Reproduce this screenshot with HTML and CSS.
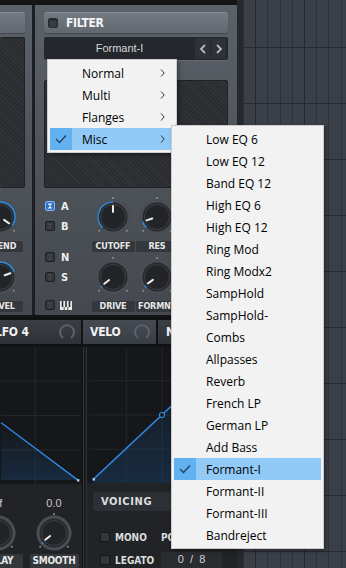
FILE: index.html
```html
<!DOCTYPE html>
<html lang="en">
<head>
  <meta charset="UTF-8">
  <meta name="viewport" content="width=device-width, initial-scale=1.0">
  <title>Filter type</title>
  <link rel="stylesheet" href="styles.css">
</head>
<body>
<div class="app">
  <div class="synth">
    <div class="upper">
      <!-- osc module, only its right edge shows -->
      <div class="mod mod-left">
        <div class="mod-head"></div>
        <div class="screen"></div>
        <div class="kstack">
          <div class="kcell">
            <svg class="knob" viewBox="0 0 40 40" width="40" height="40">
              <circle class="k-ring" cx="20" cy="20" r="17.5"/>
              <circle class="k-groove" cx="20" cy="20" r="14.5"/>
              <path class="k-arc" d="M9.39 30.61 A15 15 0 1 1 32.29 28.6"/>
              <circle class="k-cap" cx="20" cy="20" r="12.5"/>
              <line class="k-ptr" x1="20" y1="15" x2="20" y2="9" transform="rotate(125 20 20)"/>
              <circle class="k-dot" cx="33.8" cy="33.8" r="1"/>
            </svg>
            <div class="klabel">BLEND</div>
          </div>
          <div class="kcell">
            <svg class="knob" viewBox="0 0 40 40" width="40" height="40">
              <circle class="k-ring" cx="20" cy="20" r="17.5"/>
              <circle class="k-groove" cx="20" cy="20" r="14.5"/>
              <path class="k-arc" d="M9.39 30.61 A15 15 0 1 1 34.1 14.87"/>
              <circle class="k-cap" cx="20" cy="20" r="12.5"/>
              <line class="k-ptr" x1="20" y1="15" x2="20" y2="9" transform="rotate(70 20 20)"/>
              <circle class="k-dot" cx="33.8" cy="33.8" r="1"/>
            </svg>
            <div class="klabel">LEVEL</div>
          </div>
        </div>
      </div>
      <div class="vdiv"></div>
      <!-- filter module -->
      <div class="mod mod-filter">
        <div class="mod-head">
          <span class="hcheck"></span>
          <span class="mod-title">FILTER</span>
        </div>
        <div class="picker">
          <div class="picker-name">Formant-I</div>
          <div class="picker-btn"><svg width="8" height="10" viewBox="0 0 8 10"><polyline points="6,1 2,5 6,9"/></svg></div>
          <div class="picker-btn"><svg width="8" height="10" viewBox="0 0 8 10"><polyline points="2,1 6,5 2,9"/></svg></div>
        </div>
        <div class="screen"></div>
        <div class="filter-ctrl">
          <div class="switches">
            <div class="sw sw-a">
              <svg class="cb cb-on" viewBox="0 0 10 10" width="10" height="10"><rect x="0.5" y="0.5" width="9" height="9" rx="1.5"/><path d="M2.5 2.5h5L5 5zM2.5 7.5h5L5 5z"/></svg>A
            </div>
            <div class="sw sw-b">
              <svg class="cb" viewBox="0 0 10 10" width="10" height="10"><rect x="0.5" y="0.5" width="9" height="9" rx="1.5"/><path d="M2.5 2.5h5L5 5zM2.5 7.5h5L5 5z"/></svg>B
            </div>
            <div class="sw sw-n">
              <svg class="cb" viewBox="0 0 10 10" width="10" height="10"><rect x="0.5" y="0.5" width="9" height="9" rx="1.5"/><path d="M2.5 2.5h5L5 5zM2.5 7.5h5L5 5z"/></svg>N
            </div>
            <div class="sw sw-s">
              <svg class="cb" viewBox="0 0 10 10" width="10" height="10"><rect x="0.5" y="0.5" width="9" height="9" rx="1.5"/><path d="M2.5 2.5h5L5 5zM2.5 7.5h5L5 5z"/></svg>S
            </div>
            <div class="sw sw-k">
              <svg class="cb" viewBox="0 0 10 10" width="10" height="10"><rect x="0.5" y="0.5" width="9" height="9" rx="1.5"/><path d="M2.5 2.5h5L5 5zM2.5 7.5h5L5 5z"/></svg>
              <svg class="keys" viewBox="0 0 12 9" width="12" height="9"><rect width="12" height="9" fill="#e9e9e9"/><path d="M2.5 0v6M6 0v6M9.5 0v6" stroke="#2a2c30" stroke-width="1.6"/><path d="M4.2 6v3M7.8 6v3" stroke="#2a2c30" stroke-width="0.8"/></svg>
            </div>
          </div>
          <div class="kgrid">
            <div class="kcell">
              <svg class="knob" viewBox="0 0 40 40" width="40" height="40">
                <circle class="k-ring" cx="20" cy="20" r="17.5"/>
                <circle class="k-groove" cx="20" cy="20" r="14.5"/>
                <path class="k-arc" d="M9.39 30.61 A15 15 0 0 1 20 5"/>
                <circle class="k-cap" cx="20" cy="20" r="12.5"/>
                <line class="k-ptr" x1="20" y1="15" x2="20" y2="9"/>
                <circle class="k-dot" cx="20" cy="1" r="1"/>
                <circle class="k-dot" cx="6.2" cy="33.8" r="1"/>
                <circle class="k-dot" cx="33.8" cy="33.8" r="1"/>
              </svg>
              <div class="klabel">CUTOFF</div>
            </div>
            <div class="kcell">
              <svg class="knob" viewBox="0 0 40 40" width="40" height="40">
                <circle class="k-ring" cx="20" cy="20" r="17.5"/>
                <circle class="k-groove" cx="20" cy="20" r="14.5"/>
                <path class="k-arc" d="M9.39 30.61 A15 15 0 0 1 5.73 24.64"/>
                <circle class="k-cap" cx="20" cy="20" r="12.5"/>
                <line class="k-ptr" x1="20" y1="15" x2="20" y2="9" transform="rotate(-108 20 20)"/>
                <circle class="k-dot" cx="20" cy="1" r="1"/>
                <circle class="k-dot" cx="6.2" cy="33.8" r="1"/>
                <circle class="k-dot" cx="33.8" cy="33.8" r="1"/>
              </svg>
              <div class="klabel">RES</div>
            </div>
            <div class="kcell">
              <svg class="knob" viewBox="0 0 40 40" width="40" height="40">
                <circle class="k-ring" cx="20" cy="20" r="17.5"/>
                <circle class="k-groove" cx="20" cy="20" r="14.5"/>
                <path class="k-arc" d="M9.39 30.61 A15 15 0 0 1 8.18 29.23"/>
                <circle class="k-cap" cx="20" cy="20" r="12.5"/>
                <line class="k-ptr" x1="20" y1="15" x2="20" y2="9" transform="rotate(-128 20 20)"/>
                <circle class="k-dot" cx="20" cy="1" r="1"/>
                <circle class="k-dot" cx="6.2" cy="33.8" r="1"/>
                <circle class="k-dot" cx="33.8" cy="33.8" r="1"/>
              </svg>
              <div class="klabel">DRIVE</div>
            </div>
            <div class="kcell">
              <svg class="knob" viewBox="0 0 40 40" width="40" height="40">
                <circle class="k-ring" cx="20" cy="20" r="17.5"/>
                <circle class="k-groove" cx="20" cy="20" r="14.5"/>
                <path class="k-arc" d="M9.39 30.61 A15 15 0 0 1 7.71 28.6"/>
                <circle class="k-cap" cx="20" cy="20" r="12.5"/>
                <line class="k-ptr" x1="20" y1="15" x2="20" y2="9" transform="rotate(-125 20 20)"/>
                <circle class="k-dot" cx="20" cy="1" r="1"/>
                <circle class="k-dot" cx="6.2" cy="33.8" r="1"/>
                <circle class="k-dot" cx="33.8" cy="33.8" r="1"/>
              </svg>
              <div class="klabel">FORMNT</div>
            </div>
          </div>
        </div>
      </div>
    </div>

    <div class="lower">
      <div class="tabs">
        <div class="tab tab-lfo">LFO 4
          <svg class="tab-ring" viewBox="0 0 18 18" width="18" height="18"><path d="M5 15 A7 7 0 1 1 13 15"/></svg>
        </div>
        <div class="tab tab-on">VELO
          <svg class="tab-ring" viewBox="0 0 18 18" width="18" height="18"><path d="M5 15 A7 7 0 1 1 13 15"/></svg>
        </div>
        <div class="tab tab-note">NOTE</div>
      </div>
      <div class="lbody">
        <div class="lcol">
          <svg class="graph" viewBox="0 0 82 141" width="82" height="141">
            <defs>
              <linearGradient id="glowA" x1="0" y1="0" x2="0" y2="1">
                <stop offset="0" stop-color="#1d4f86" stop-opacity="0"/>
                <stop offset="1" stop-color="#1d4f86" stop-opacity="0.35"/>
              </linearGradient>
            </defs>
            <path class="g-grid" d="M35 0v141M0 35h82M0 70.5h82M0 106h82"/>
            <path d="M0 78 L79 137 L0 137z" fill="url(#glowA)"/>
            <path class="g-line" d="M0 78 L79 137"/>
            <rect class="g-node" x="78" y="136" width="2.5" height="2.5"/>
          </svg>
          <div class="ctrl ctrl-left">
            <div class="kcell kcell-off">
              <div class="kval">Off</div>
              <svg class="knob" viewBox="0 0 40 40" width="40" height="40">
                <circle class="k-ring" cx="20" cy="20" r="17.5"/>
                <circle class="k-groove" cx="20" cy="20" r="14.5"/>
                <circle class="k-cap" cx="20" cy="20" r="12.5"/>
                <line class="k-ptr" x1="20" y1="15" x2="20" y2="9" transform="rotate(-135 20 20)"/>
                <circle class="k-dot" cx="33.8" cy="33.8" r="1"/>
              </svg>
              <div class="klabel">DELAY</div>
            </div>
            <div class="kcell">
              <div class="kval">0.0</div>
              <svg class="knob" viewBox="0 0 40 40" width="40" height="40">
                <circle class="k-ring" cx="20" cy="20" r="17.5"/>
                <circle class="k-groove" cx="20" cy="20" r="14.5"/>
                <path class="k-arc" d="M9.39 30.61 A15 15 0 0 1 8.18 29.23"/>
                <circle class="k-cap" cx="20" cy="20" r="12.5"/>
                <line class="k-ptr" x1="20" y1="15" x2="20" y2="9" transform="rotate(-128 20 20)"/>
                <circle class="k-dot" cx="20" cy="1" r="1"/>
                <circle class="k-dot" cx="6.2" cy="33.8" r="1"/>
                <circle class="k-dot" cx="33.8" cy="33.8" r="1"/>
              </svg>
              <div class="klabel">SMOOTH</div>
            </div>
          </div>
        </div>
        <div class="ldiv"></div>
        <div class="lcol">
          <svg class="graph" viewBox="0 0 150 141" width="150" height="141">
            <defs>
              <linearGradient id="glowB" x1="0" y1="0" x2="0" y2="1">
                <stop offset="0" stop-color="#1d4f86" stop-opacity="0"/>
                <stop offset="1" stop-color="#1d4f86" stop-opacity="0.35"/>
              </linearGradient>
            </defs>
            <path class="g-grid" d="M38 0v141M75 0v141M113 0v141M0 35h150M0 70.5h150M0 106h150"/>
            <path d="M4 137 L150 0 L150 141 L4 141z" fill="url(#glowB)"/>
            <path class="g-line" d="M4 137 L150 0"/>
            <rect class="g-node" x="3" y="136" width="2.5" height="2.5"/>
            <circle class="g-dot" cx="75" cy="70.5" r="2.6"/>
          </svg>
          <div class="ctrl ctrl-right">
            <div class="voicing">VOICING</div>
            <div class="vrow">
              <div class="vopts">
                <div class="opt"><span class="vcb"></span>MONO</div>
                <div class="opt"><span class="vcb"></span>LEGATO</div>
              </div>
              <div class="vpoly">
                <div class="opt">POLY</div>
                <div class="vbox">0&nbsp;&nbsp;/&nbsp;&nbsp;8</div>
              </div>
            </div>
          </div>
        </div>
      </div>
    </div>
  </div>
  <div class="edge"></div>
  <div class="roll"></div>
</div>

<!-- filter type menu -->
<div class="menu menu-main">
  <div class="mi"><span class="mi-chk"></span><span class="mi-txt">Normal</span><svg class="mi-arr" viewBox="0 0 5 8" width="5" height="8"><polyline points="1,0.5 4.2,4 1,7.5"/></svg></div>
  <div class="mi"><span class="mi-chk"></span><span class="mi-txt">Multi</span><svg class="mi-arr" viewBox="0 0 5 8" width="5" height="8"><polyline points="1,0.5 4.2,4 1,7.5"/></svg></div>
  <div class="mi"><span class="mi-chk"></span><span class="mi-txt">Flanges</span><svg class="mi-arr" viewBox="0 0 5 8" width="5" height="8"><polyline points="1,0.5 4.2,4 1,7.5"/></svg></div>
  <div class="mi mi-on"><span class="mi-chk"><svg class="tick" viewBox="0 0 12 10" width="12" height="10"><polyline points="1,5 4.5,8.5 11,1.5"/></svg></span><span class="mi-txt">Misc</span><svg class="mi-arr" viewBox="0 0 5 8" width="5" height="8"><polyline points="1,0.5 4.2,4 1,7.5"/></svg></div>
</div>

<div class="menu menu-sub">
  <div class="mi"><span class="mi-chk"></span><span class="mi-txt">Low EQ 6</span></div>
  <div class="mi"><span class="mi-chk"></span><span class="mi-txt">Low EQ 12</span></div>
  <div class="mi"><span class="mi-chk"></span><span class="mi-txt">Band EQ 12</span></div>
  <div class="mi"><span class="mi-chk"></span><span class="mi-txt">High EQ 6</span></div>
  <div class="mi"><span class="mi-chk"></span><span class="mi-txt">High EQ 12</span></div>
  <div class="mi"><span class="mi-chk"></span><span class="mi-txt">Ring Mod</span></div>
  <div class="mi"><span class="mi-chk"></span><span class="mi-txt">Ring Modx2</span></div>
  <div class="mi"><span class="mi-chk"></span><span class="mi-txt">SampHold</span></div>
  <div class="mi"><span class="mi-chk"></span><span class="mi-txt">SampHold-</span></div>
  <div class="mi"><span class="mi-chk"></span><span class="mi-txt">Combs</span></div>
  <div class="mi"><span class="mi-chk"></span><span class="mi-txt">Allpasses</span></div>
  <div class="mi"><span class="mi-chk"></span><span class="mi-txt">Reverb</span></div>
  <div class="mi"><span class="mi-chk"></span><span class="mi-txt">French LP</span></div>
  <div class="mi"><span class="mi-chk"></span><span class="mi-txt">German LP</span></div>
  <div class="mi"><span class="mi-chk"></span><span class="mi-txt">Add Bass</span></div>
  <div class="mi mi-on"><span class="mi-chk"><svg class="tick" viewBox="0 0 12 10" width="12" height="10"><polyline points="1,5 4.5,8.5 11,1.5"/></svg></span><span class="mi-txt">Formant-I</span></div>
  <div class="mi"><span class="mi-chk"></span><span class="mi-txt">Formant-II</span></div>
  <div class="mi"><span class="mi-chk"></span><span class="mi-txt">Formant-III</span></div>
  <div class="mi"><span class="mi-chk"></span><span class="mi-txt">Bandreject</span></div>
</div>
</body>
</html>
```

FILE: styles.css
```css
* {
  box-sizing: border-box;
}

body {
  margin: 0;
  background: #141517;
  overflow: hidden;
  font-family: "DejaVu Sans Condensed", "DejaVu Sans", sans-serif;
  font-stretch: condensed;
}

.app {
  display: flex;
  width: 346px;
  height: 568px;
}

.synth {
  width: 237px;
  display: flex;
  flex-direction: column;
}

/* ---------- upper modules ---------- */
.upper {
  display: flex;
  height: 315px;
  padding-top: 5px;
  background: #141517;
}

.mod {
  background: linear-gradient(#5c6269, #50555c 45%, #45494f);
  overflow: hidden;
}

.mod-left {
  width: 32px;
  padding-right: 7px;
}

.vdiv {
  width: 3px;
  background: #1d1e21;
}

.mod-filter {
  flex: 1;
  padding: 0 9px;
}

.mod-head {
  margin-top: 7px;
  height: 21px;
  border-radius: 3px;
  background: linear-gradient(#757b82, #62686f);
  box-shadow: inset 0 1px 0 rgba(255, 255, 255, .12), 0 1px 1px rgba(0, 0, 0, .25);
  display: flex;
  align-items: center;
  gap: 8px;
  padding-left: 4px;
}

.mod-left .mod-head {
  border-radius: 0 3px 3px 0;
}

.hcheck {
  width: 10px;
  height: 10px;
  border-radius: 2px;
  background: #3c3f44;
  border: 1px solid #2a2c30;
  box-shadow: inset 0 1px 2px rgba(0, 0, 0, .5);
}

.mod-title {
  color: #f4f4f4;
  font-weight: bold;
  font-size: 12px;
  letter-spacing: -0.3px;
}

.picker {
  margin-top: 4px;
  height: 23px;
  display: flex;
  gap: 1px;
  padding: 1px 2px 1px 1px;
  background: #24272b;
  border-radius: 2px;
  box-shadow: 0 1px 0 rgba(255, 255, 255, .08);
}

.picker-name {
  flex: 1;
  text-align: center;
  line-height: 21px;
  color: #d6d9dc;
  font-family: "Liberation Sans", Arial, sans-serif;
  font-size: 11px;
}

.picker-btn {
  width: 15px;
  background: #2e3136;
  display: flex;
  align-items: center;
  justify-content: center;
}

.picker-btn polyline {
  fill: none;
  stroke: #b4b8bd;
  stroke-width: 1.8;
}

.screen {
  border: 1px solid #1f2124;
  border-radius: 2px;
  background: repeating-linear-gradient(45deg, #2a2c30 0, #2a2c30 2px, #323539 2px, #323539 3px);
}

.mod-left .screen {
  margin-top: 4px;
  height: 151px;
  border-left: 0;
}

.mod-filter .screen {
  margin-top: 20px;
  height: 108px;
}

/* ---------- knobs ---------- */
.knob {
  display: block;
}

.k-ring {
  fill: #4a4e54;
}

.k-groove {
  fill: #27292d;
}

.k-arc {
  fill: none;
  stroke: #2a8ae0;
  stroke-width: 1.6;
}

.k-cap {
  fill: #222428;
  stroke: #3f4348;
  stroke-width: 0.9;
}

.k-ptr {
  stroke: #ececec;
  stroke-width: 2;
  stroke-linecap: round;
}

.k-dot {
  fill: #8a9096;
}

.kcell {
  display: flex;
  flex-direction: column;
  align-items: center;
}

.klabel {
  margin-top: 4px;
  width: 43px;
  height: 11px;
  line-height: 11px;
  border-radius: 2px;
  background: #34373c;
  color: #e8e8e8;
  font-size: 9px;
  font-weight: bold;
  text-align: center;
  letter-spacing: -0.2px;
}

.kstack {
  display: flex;
  flex-direction: column;
  gap: 5px;
  padding-top: 9px;
}

.kstack .kcell {
  align-items: flex-start;
}

.kstack .knob {
  margin-left: -20px;
}

.kstack .klabel {
  margin-left: -20px;
}

/* ---------- filter controls ---------- */
.filter-ctrl {
  display: flex;
}

.switches {
  width: 47px;
  padding: 13px 0 0 1px;
  display: flex;
  flex-direction: column;
}

.sw {
  display: flex;
  align-items: center;
  gap: 6px;
  height: 10px;
  color: #eeeeee;
  font-size: 11px;
  font-weight: bold;
}

.sw-b,
.sw-s {
  margin-top: 10px;
}

.sw-n {
  margin-top: 21px;
}

.sw-k {
  margin-top: 18px;
  gap: 5px;
}

.cb rect {
  fill: #33363a;
  stroke: #1e2023;
}

.cb path {
  fill: #474b50;
}

.cb-on rect {
  fill: #2f6fc4;
  stroke: #7fb9ff;
}

.cb-on path {
  fill: #f2f6fb;
}

.kgrid {
  display: grid;
  grid-template-columns: 44px 44px;
  row-gap: 5px;
  padding-top: 9px;
}

/* ---------- lower section ---------- */
.lower {
  flex: 1;
  padding-top: 5px;
  background: #111214;
}

.tabs {
  display: flex;
  gap: 2px;
  height: 24px;
  overflow: hidden;
}

.tab {
  position: relative;
  display: flex;
  align-items: center;
  justify-content: space-between;
  padding: 0 5px 0 7px;
  background: linear-gradient(#3a3e45, #2f3238);
  color: #f2f2f2;
  font-size: 12px;
  font-weight: bold;
  letter-spacing: -0.2px;
}

.tab-lfo {
  margin-left: -12px;
  width: 93px;
}

.tab-on {
  width: 73px;
  background: linear-gradient(#464b53, #393d44);
}

.tab-note {
  flex: 1;
  padding-left: 8px;
}

.tab-ring path {
  fill: none;
  stroke: #5d626a;
  stroke-width: 2;
}

.lbody {
  margin-top: 3px;
  display: grid;
  grid-template-columns: 82px 5px 150px;
  height: 221px;
}

.tab-on::after {
  content: "";
  position: absolute;
  left: 31px;
  bottom: -4px;
  border-left: 5px solid transparent;
  border-right: 5px solid transparent;
  border-top: 4px solid #393d44;
}

.lcol {
  display: flex;
  flex-direction: column;
  overflow: hidden;
}

.ldiv {
  background: linear-gradient(90deg, #101113 0, #101113 1px, #34373c 1px, #34373c 2px, #1a1b1e 2px, #1a1b1e 4px, #303338 4px);
}

.graph {
  display: block;
  background: #15171a;
}

.g-grid {
  stroke: #25282c;
  stroke-width: 1;
}

.g-line {
  stroke: #2f86dc;
  stroke-width: 1.5;
  fill: none;
}

.g-node {
  fill: #a9d1f5;
}

.g-dot {
  fill: #15171a;
  stroke: #2f86dc;
  stroke-width: 1.2;
}

.ctrl {
  flex: 1;
  background: #212326;
}

.ctrl-left {
  display: flex;
  margin-left: -30px;
}

.ctrl-left .kcell {
  width: 56px;
}

.kcell-off .kval {
  margin-left: -6px;
}

.kval {
  margin-top: 13px;
  height: 12px;
  margin-bottom: 4px;
  color: #c9cbce;
  font-family: "Liberation Sans", Arial, sans-serif;
  font-size: 11px;
}

.ctrl-left .klabel {
  margin-top: 1px;
  width: 49px;
  height: 14px;
  line-height: 14px;
  font-size: 10px;
}

.voicing {
  margin: 9px 0 0 6px;
  height: 19px;
  line-height: 19px;
  padding-left: 8px;
  border-radius: 2px;
  background: #2c2f34;
  color: #dcdee0;
  font-size: 11px;
  font-weight: bold;
  letter-spacing: 0.6px;
}

.vrow {
  display: flex;
  margin-top: 21px;
}

.vopts {
  width: 74px;
  padding-left: 13px;
  display: flex;
  flex-direction: column;
  gap: 13px;
}

.opt {
  display: flex;
  align-items: center;
  gap: 5px;
  height: 10px;
  color: #dadcde;
  font-size: 10px;
  font-weight: bold;
}

.vcb {
  width: 10px;
  height: 10px;
  border-radius: 2px;
  background: #33363a;
  border: 1px solid #17181a;
}

.vpoly .vbox {
  margin-top: 10px;
  width: 61px;
  height: 16px;
  line-height: 14px;
  border-radius: 2px;
  background: #2a2c30;
  color: #cfd1d3;
  text-align: center;
  font-family: "Liberation Sans", Arial, sans-serif;
  font-size: 11px;
}

/* ---------- piano roll behind ---------- */
.edge {
  width: 6px;
  background: #25282d;
}

.roll {
  flex: 1;
  background-color: #3b3f48;
  background-image:
    repeating-linear-gradient(180deg, transparent 0, transparent 47px, #272a31 47px, #272a31 48.5px, transparent 48.5px, transparent 56px),
    repeating-linear-gradient(90deg, transparent 0, transparent 12.2px, #24272d 12.2px, #24272d 13.4px, transparent 13.4px, transparent 48.8px),
    repeating-linear-gradient(90deg, #2d3139 0, #2d3139 1px, transparent 1px, transparent 12.2px);
}

/* ---------- popup menus ---------- */
.menu {
  position: absolute;
  background: #f2f2f2;
  border: 1px solid #cccccc;
  padding: 2px;
  box-shadow: 2px 2px 4px rgba(0, 0, 0, .35);
  font-family: "Open Sans", "Noto Sans", sans-serif;
  font-stretch: normal;
  font-size: 12px;
  color: #000000;
}

.menu-main {
  left: 47px;
  top: 59px;
  width: 130px;
}

.menu-sub {
  left: 171px;
  top: 125px;
  width: 153px;
}

.mi {
  display: flex;
  align-items: center;
  height: 22px;
}

.mi-chk {
  width: 22px;
  height: 22px;
  display: flex;
  align-items: center;
  justify-content: center;
}

.mi-txt {
  flex: 1;
  padding-left: 10px;
}

.mi-arr {
  margin-right: 9px;
}

.mi-arr polyline {
  fill: none;
  stroke: #333333;
  stroke-width: 1;
}

.mi-on {
  background: #91c9f7;
}

.mi-on .mi-chk {
  background: #62b1f1;
}

.tick polyline {
  fill: none;
  stroke: #23405f;
  stroke-width: 1.3;
}
```
